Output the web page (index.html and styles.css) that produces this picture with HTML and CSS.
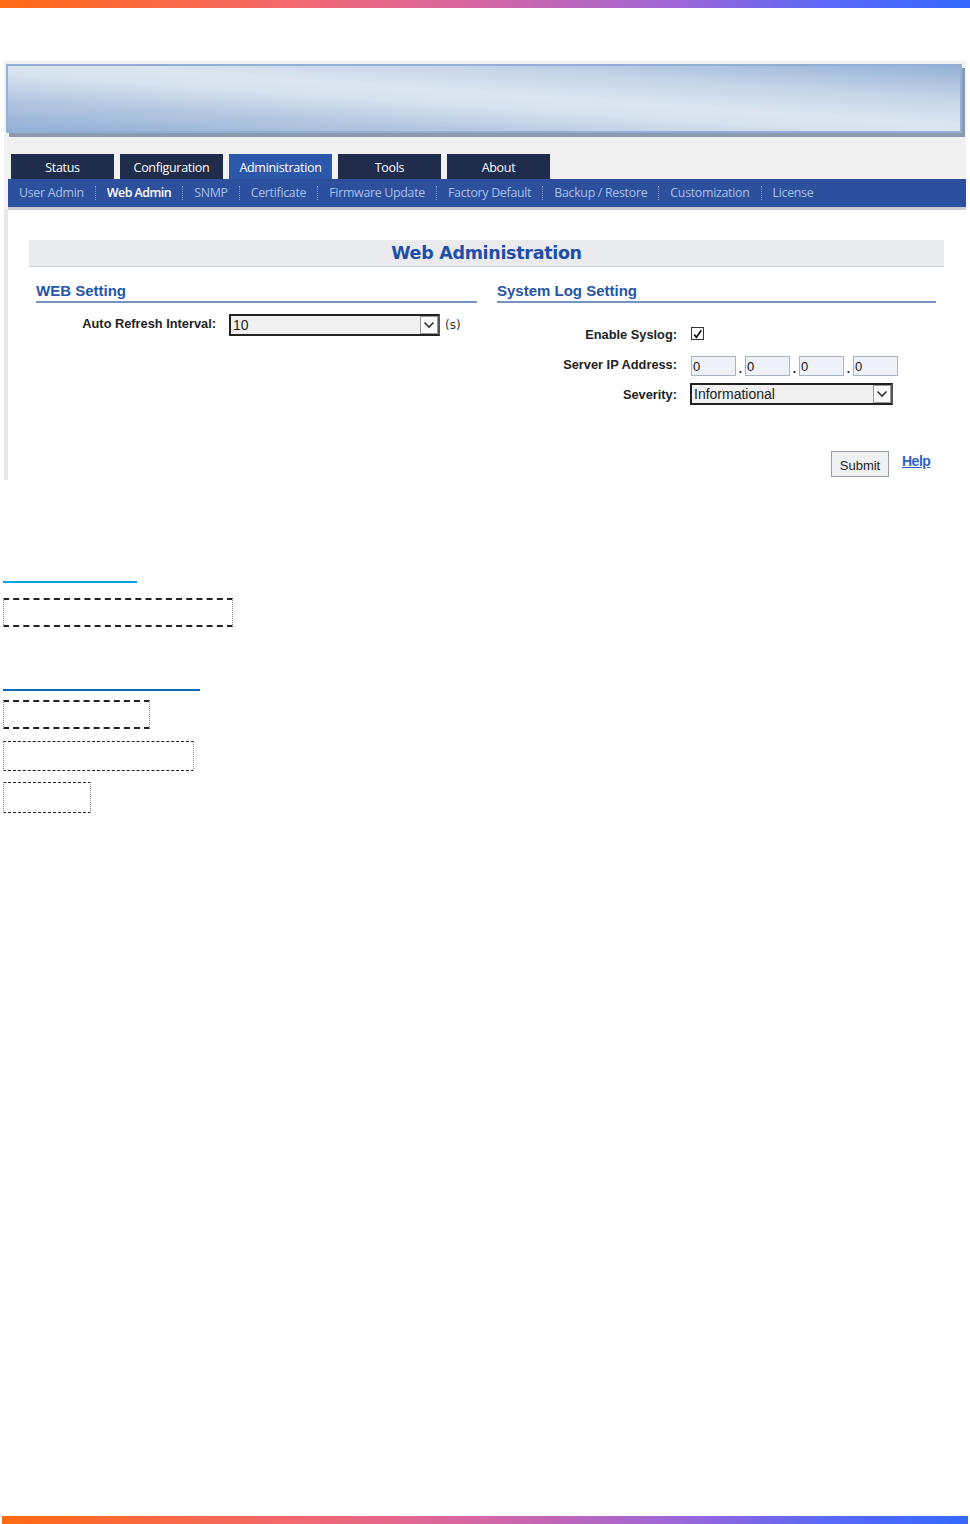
FILE: index.html
```html
<!DOCTYPE html>
<html lang="en">
<head>
  <meta charset="UTF-8" />
  <title>Web Administration</title>
  <link rel="stylesheet" href="styles.css">
</head>
<body>
  <div class="page">
    <div class="color-bar"></div>

    <div class="shot">
      <div class="banner"></div>

      <div class="tabs">
        <div class="tab">Status</div>
        <div class="tab">Configuration</div>
        <div class="tab active">Administration</div>
        <div class="tab">Tools</div>
        <div class="tab">About</div>
      </div>

      <div class="subnav">
        <a href="#" class="sub-item">User Admin</a>
        <a href="#" class="sub-item current">Web Admin</a>
        <a href="#" class="sub-item">SNMP</a>
        <a href="#" class="sub-item">Certificate</a>
        <a href="#" class="sub-item">Firmware Update</a>
        <a href="#" class="sub-item">Factory Default</a>
        <a href="#" class="sub-item">Backup / Restore</a>
        <a href="#" class="sub-item">Customization</a>
        <a href="#" class="sub-item">License</a>
      </div>

      <div class="content">
        <div class="title-bar">Web Administration</div>

        <div class="columns">
          <div class="column">
            <div class="section-title">WEB Setting</div>
            <div class="form-row first-left">
              <div class="label">Auto Refresh Interval:</div>
              <div class="select wide">
                <span>10</span>
                <span class="arrow">
                  <svg width="12" height="8" viewBox="0 0 12 8"><path d="M1.5 1.5 L6 6 L10.5 1.5" fill="none" stroke="#333" stroke-width="1.6"/></svg>
                </span>
              </div>
              <span class="unit">(s)</span>
            </div>
          </div>

          <div class="column">
            <div class="section-title">System Log Setting</div>
            <div class="form-row first-right">
              <div class="label">Enable Syslog:</div>
              <span class="checkbox">
                <svg width="13" height="13" viewBox="0 0 13 13"><path d="M2.5 6.5 L5.2 9.8 L11 1.5" fill="none" stroke="#111" stroke-width="2"/></svg>
              </span>
            </div>
            <div class="form-row">
              <div class="label">Server IP Address:</div>
              <div class="ip">
                <input type="text" value="0"><span class="dot">.</span>
                <input type="text" value="0"><span class="dot">.</span>
                <input type="text" value="0"><span class="dot">.</span>
                <input type="text" value="0">
              </div>
            </div>
            <div class="form-row">
              <div class="label">Severity:</div>
              <div class="select severity">
                <span>Informational</span>
                <span class="arrow">
                  <svg width="12" height="8" viewBox="0 0 12 8"><path d="M1.5 1.5 L6 6 L10.5 1.5" fill="none" stroke="#333" stroke-width="1.6"/></svg>
                </span>
              </div>
            </div>
          </div>
        </div>

        <div class="actions">
          <button type="button" class="submit">Submit</button>
          <a href="#" class="help">Help</a>
        </div>
      </div>
    </div>

    <div class="blanks">
      <div class="rule light"></div>
      <div class="blank b1"></div>

      <div class="rule dark"></div>
      <div class="blank b2"></div>
      <div class="blank b3"></div>
      <div class="blank b4"></div>
    </div>

    <div class="color-bar bottom"></div>
  </div>
</body>
</html>
```

FILE: styles.css
```css
html, body {
  margin: 0;
  padding: 0;
}

body {
  background: #fff;
  font-family: "Liberation Sans", Arial, sans-serif;
  color: #222;
}

.page {
  height: 1524px;
  display: flex;
  flex-direction: column;
}

.color-bar {
  height: 8px;
  background: linear-gradient(90deg, #ff6a12 0%, #f2686e 30%, #d466a6 50%, #9c66d8 70%, #5c68f6 85%, #3369ff 100%);
}

.color-bar.bottom {
  margin: auto 2px 0 2px;
}

/* screenshot of the device web ui */
.shot {
  margin: 53px 4px 0 4px;
  background: #f1f1f1;
  padding-top: 3px;
}

.banner {
  height: 65px;
  margin: 0 4px 0 2px;
  border: 2px solid #93afd5;
  background: linear-gradient(to bottom left, #94b1d7 0%, #c5d4e8 26%, #dce5f0 46%, #d8e2ef 56%, #b4c7e1 76%, #92afd6 100%);
  box-shadow: 3px 4px 0 #8b9cb1;
}

.tabs {
  display: flex;
  gap: 6px;
  margin-top: 21px;
  padding-left: 7px;
}

.tab {
  width: 103px;
  height: 25px;
  line-height: 27px;
  background: #1f2c4c;
  color: #fff;
  text-align: center;
  font-family: "Open Sans", sans-serif;
  font-size: 12.5px;
  letter-spacing: -0.3px;
}

.tab.active {
  background: #2b58ab;
}

.subnav {
  display: flex;
  align-items: center;
  height: 28px;
  margin-left: 4px;
  background: #2c4f9e;
  border-bottom: 3px solid #c9cbcf;
}

.sub-item {
  color: #a8c0e8;
  text-decoration: none;
  font-family: "Open Sans", sans-serif;
  font-size: 12.4px;
  letter-spacing: -0.3px;
  padding: 0 11px;
  line-height: 14px;
  border-left: 1px dotted #7f9bd0;
}

.sub-item:first-child {
  border-left: none;
}

.sub-item.current {
  color: #fff;
  font-weight: 600;
  letter-spacing: -0.5px;
}

.content {
  height: 270px;
  background: #fff;
  border-left: 4px solid #e6e6e6;
  padding: 30px 0 0 21px;
  box-sizing: border-box;
}

.title-bar {
  width: 915px;
  height: 26px;
  line-height: 27px;
  background: #e9ebee;
  border-bottom: 1px solid #c7ccd4;
  text-align: center;
  color: #1f4ea8;
  font-family: "DejaVu Sans", Verdana, sans-serif;
  font-weight: bold;
  font-size: 17.5px;
  letter-spacing: -0.3px;
}

.columns {
  display: flex;
  gap: 20px;
  padding-left: 7px;
  margin-top: 15px;
}

.column {
  width: 441px;
}

.column + .column {
  width: 439px;
}

.section-title {
  color: #2455a8;
  font-weight: bold;
  font-size: 15px;
  padding-bottom: 2px;
  border-bottom: 2px solid #7592c3;
}

.form-row {
  display: flex;
  align-items: center;
  margin-top: 8px;
  height: 22px;
}

.form-row.first-left {
  margin-top: 11px;
}

.form-row.first-right {
  margin-top: 20px;
}

.label {
  width: 180px;
  text-align: right;
  font-weight: bold;
  font-size: 12.8px;
  color: #222;
  padding-right: 13px;
}

.first-left .label {
  margin-top: -3px;
}

.column + .column .label {
  padding-right: 14px;
}

.select {
  display: flex;
  align-items: center;
  justify-content: space-between;
  height: 22px;
  box-sizing: border-box;
  border: 2px solid #222;
  border-right-color: #555;
  background: #f0f0f0;
  font-size: 14px;
  padding-left: 2px;
}

.select.wide {
  width: 211px;
}

.select.severity {
  width: 203px;
  margin-left: -1px;
}

.arrow {
  width: 18px;
  height: 18px;
  box-sizing: border-box;
  border: 1px solid #999;
  background: #fafafa;
  display: flex;
  align-items: center;
  justify-content: center;
}

.unit {
  margin-left: 5px;
  font-size: 12px;
  font-family: "DejaVu Sans", sans-serif;
  color: #333;
}

.checkbox {
  display: inline-flex;
  width: 13px;
  height: 13px;
  box-sizing: border-box;
  border: 1px solid #333;
  background: #fff;
  margin-top: -2px;
}

.ip {
  display: flex;
  align-items: center;
  margin-top: 3px;
}

.ip input {
  width: 45px;
  height: 20px;
  box-sizing: border-box;
  border: 1px solid #a8b4c6;
  background: #eef2f8;
  font-family: "Liberation Sans", Arial, sans-serif;
  font-size: 13px;
  padding: 2px 1px 0;
  margin: 0;
  color: #111;
}

.dot {
  width: 9px;
  text-align: center;
  font-weight: bold;
  font-size: 12px;
  line-height: 12px;
  margin-top: 6px;
}

.actions {
  display: flex;
  align-items: center;
  margin: 42px 0 0 802px;
}

.submit {
  width: 58px;
  height: 26px;
  background: #eef0f2;
  border: 1px solid #9aa0a8;
  font-family: "Liberation Sans", Arial, sans-serif;
  font-size: 13px;
  color: #222;
  padding: 2px 0 0;
  margin-top: 4px;
}

.help {
  margin: -2px 0 0 13px;
  color: #2a62c7;
  font-weight: bold;
  font-size: 14px;
  letter-spacing: -0.5px;
}

/* blank placeholders under the screenshot */
.blanks {
  padding: 101px 0 0 3px;
}

.rule {
  height: 2px;
}

.rule.light {
  width: 134px;
  background: #00a3e8;
}

.rule.dark {
  width: 197px;
  background: #0a68b4;
  margin-top: 62px;
}

.blank {
  box-sizing: border-box;
  border-top: 2px dashed #222;
  border-bottom: 2px dashed #222;
  border-left: 1px dotted #888;
  border-right: 1px dotted #888;
}

.b1 {
  width: 230px;
  height: 29px;
  margin-top: 15px;
}

.b2 {
  width: 147px;
  height: 29px;
  margin-top: 9px;
}

.b3 {
  width: 191px;
  height: 30px;
  margin-top: 12px;
  border-top-width: 1px;
  border-bottom-width: 1px;
}

.b4 {
  width: 88px;
  height: 31px;
  margin-top: 11px;
  border-top-width: 1px;
  border-bottom-width: 1px;
}
```
